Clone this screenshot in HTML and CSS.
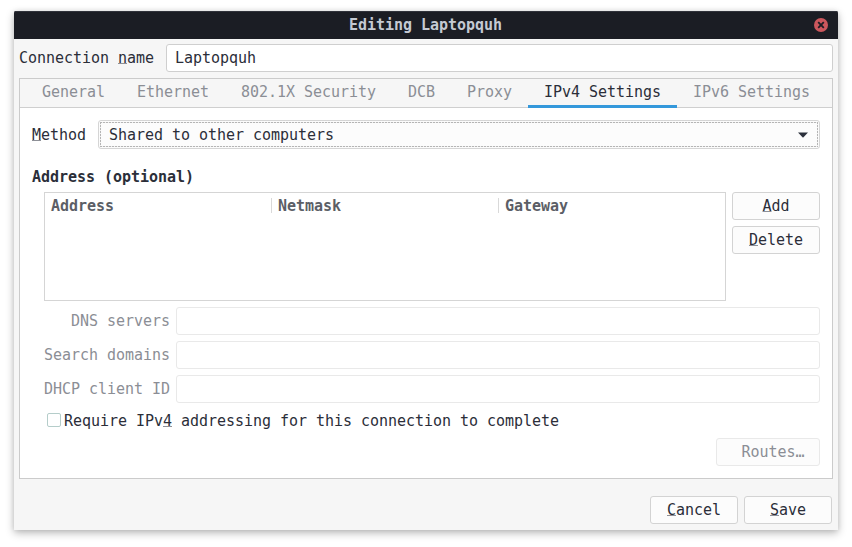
FILE: index.html
```html
<!DOCTYPE html>
<html lang="en">
<head>
<meta charset="utf-8">
<title>Editing Laptopquh</title>
<link rel="stylesheet" href="styles.css">
</head>
<body>
<main class="window">
  <header class="titlebar">
    <h1 class="title">Editing Laptopquh</h1>
    <svg class="close" width="14" height="14" viewBox="0 0 14 14" aria-label="Close">
      <circle cx="7" cy="7" r="7" fill="#cc575d"/>
      <path d="M4.2 4.2l5.6 5.6M9.8 4.2l-5.6 5.6" stroke="#1b1d24" stroke-width="1.8"/>
    </svg>
  </header>
  <div class="name-row">
    <span class="name-label">Connection <u>n</u>ame</span>
    <div class="entry name-entry">Laptopquh</div>
  </div>
  <section class="notebook">
    <nav class="tabs">
      <span class="tab">General</span>
      <span class="tab">Ethernet</span>
      <span class="tab">802.1X Security</span>
      <span class="tab">DCB</span>
      <span class="tab">Proxy</span>
      <span class="tab active">IPv4 Settings</span>
      <span class="tab">IPv6 Settings</span>
    </nav>
    <div class="page">
      <div class="method-row">
        <span class="method-label"><u>M</u>ethod</span>
        <div class="combo">
          <div class="focus">
            <span>Shared to other computers</span>
            <svg width="10" height="6" viewBox="0 0 10 6"><path d="M0 0.5h10L5 5.7z" fill="#2b303b"/></svg>
          </div>
        </div>
      </div>
      <h2 class="heading">Address (optional)</h2>
      <div class="address-row">
        <div class="tree">
          <span class="column">Address</span>
          <span class="column">Netmask</span>
          <span class="column last">Gateway</span>
        </div>
        <div class="side">
          <div class="button"><span><u>A</u>dd</span></div>
          <div class="button"><span><u>D</u>elete</span></div>
        </div>
      </div>
      <div class="fields">
        <span class="field-label">DNS servers</span><div class="entry disabled"></div>
        <span class="field-label">Search domains</span><div class="entry disabled"></div>
        <span class="field-label">DHCP client ID</span><div class="entry disabled"></div>
      </div>
      <div class="check-row">
        <span class="checkbox"></span>
        <span class="check-label">Require IPv<u>4</u> addressing for this connection to complete</span>
      </div>
      <div class="button routes">Routes…</div>
    </div>
  </section>
  <footer class="actions">
    <div class="button"><span><u>C</u>ancel</span></div>
    <div class="button"><span><u>S</u>ave</span></div>
  </footer>
</main>
</body>
</html>
```
FILE: styles.css
```css
* {
  box-sizing: border-box;
}

body {
  margin: 0;
  padding: 11px 14px 17px;
  height: 547px;
  overflow: hidden;
  background: #fff;
  color: #2b2e39;
  font: 15px/20px "DejaVu Sans Mono", "Liberation Mono", monospace;
  letter-spacing: -0.031px;
  white-space: nowrap;
}

u {
  text-decoration: underline;
  text-decoration-color: #8e9097;
  text-decoration-thickness: 1px;
  text-underline-offset: 0;
  text-decoration-skip-ink: none;
}

.window {
  display: flex;
  flex-direction: column;
  height: 519px;
  background: #f6f6f6;
  border-radius: 2px 2px 0 0;
  box-shadow: 0 3px 9px rgba(0, 0, 0, 0.28), 0 0 5px rgba(0, 0, 0, 0.08);
}

.titlebar {
  display: grid;
  grid-template-columns: 24px 1fr 24px;
  align-items: center;
  height: 28px;
  background: #1b1d24;
  box-shadow: inset 0 1px #30323a;
  border-radius: 2px 2px 0 0;
}

.title {
  grid-column: 2;
  margin: 0;
  padding-right: 1px;
  color: #c5cad3;
  font-size: 15px;
  line-height: 20px;
  font-weight: bold;
  text-align: center;
}

.name-row {
  display: flex;
  align-items: center;
  gap: 12px;
  padding: 5px 5px 6px;
}

.name-label {
  width: 135px;
}

.entry {
  height: 28px;
  padding: 3px 8px;
  background: #fff;
  border: 1px solid #cfcfcf;
  border-radius: 3px;
}

.name-entry {
  flex: 1;
}

.notebook {
  height: 401px;
  margin: 0 5px;
  border: 1px solid #cbcbcb;
  background: #fff;
}

.tabs {
  display: flex;
  height: 29px;
  padding-left: 6px;
  background: #f6f6f6;
  box-shadow: inset 0 -1px #cfcfcf;
}

.tab {
  padding: 3px 16px 0;
  color: #8b8e95;
}

.tab.active {
  color: #2b2e39;
  border-bottom: 3px solid #3498db;
}

.page {
  display: flex;
  flex-direction: column;
  padding: 12px;
}

.method-row {
  display: flex;
  align-items: center;
  gap: 12px;
}

.method-label {
  width: 54px;
}

.combo {
  flex: 1;
  height: 29px;
  padding: 1px;
  background: #fcfcfc;
  border: 1px solid #d5d5d5;
  border-radius: 3px;
}

.focus {
  --across: repeating-linear-gradient(90deg, #b5b5b5 0 2px, #f0f0f0 2px 3px);
  --down: repeating-linear-gradient(#b5b5b5 0 2px, #f0f0f0 2px 3px);
  display: flex;
  align-items: center;
  justify-content: space-between;
  height: 25px;
  padding: 0 10px 0 9px;
  background:
    var(--across) top / 100% 1px no-repeat,
    var(--across) bottom / 100% 1px no-repeat,
    var(--down) left / 1px 100% no-repeat,
    var(--down) right / 1px 100% no-repeat;
}

.heading {
  margin: 18px 0 5px;
  font-size: 15px;
  line-height: 20px;
  font-weight: bold;
}

.address-row {
  display: flex;
  gap: 6px;
  margin-left: 12px;
}

.tree {
  display: grid;
  grid-template-columns: 227px 227px 1fr;
  align-items: start;
  flex: 1;
  height: 109px;
  border: 1px solid #d5d5d5;
  color: #5b5e66;
  font-weight: bold;
}

.column {
  height: 15px;
  margin-top: 5px;
  padding-left: 6px;
  line-height: 17px;
  border-right: 1px solid #d9d9d9;
}

.column.last {
  border: 0;
}

.side {
  display: flex;
  flex-direction: column;
  gap: 6px;
}

.button {
  width: 88px;
  height: 28px;
  padding-top: 3px;
  background: #fcfcfc;
  border: 1px solid #d3d3d3;
  border-radius: 3px;
  text-align: center;
}

.fields {
  display: grid;
  grid-template-columns: 126px 1fr;
  align-items: center;
  gap: 6px;
  margin: 6px 0 0 12px;
}

.field-label {
  color: #8b8e95;
  text-align: right;
}

.disabled {
  border-color: #e9e9e9;
}

.check-row {
  display: flex;
  align-items: center;
  gap: 3px;
  height: 20px;
  margin: 7px 0 0 15px;
}

.checkbox {
  width: 14px;
  height: 14px;
  border: 1px solid #b5cdca;
  border-radius: 2px;
}

.check-label {
  padding-top: 2px;
}

.routes {
  align-self: flex-end;
  width: 104px;
  margin-top: 8px;
  padding-left: 10px;
  border-color: #e9e9e9;
  color: #8b8e95;
}

.actions {
  display: flex;
  justify-content: flex-end;
  gap: 6px;
  padding: 17px 6px 0;
}
```
